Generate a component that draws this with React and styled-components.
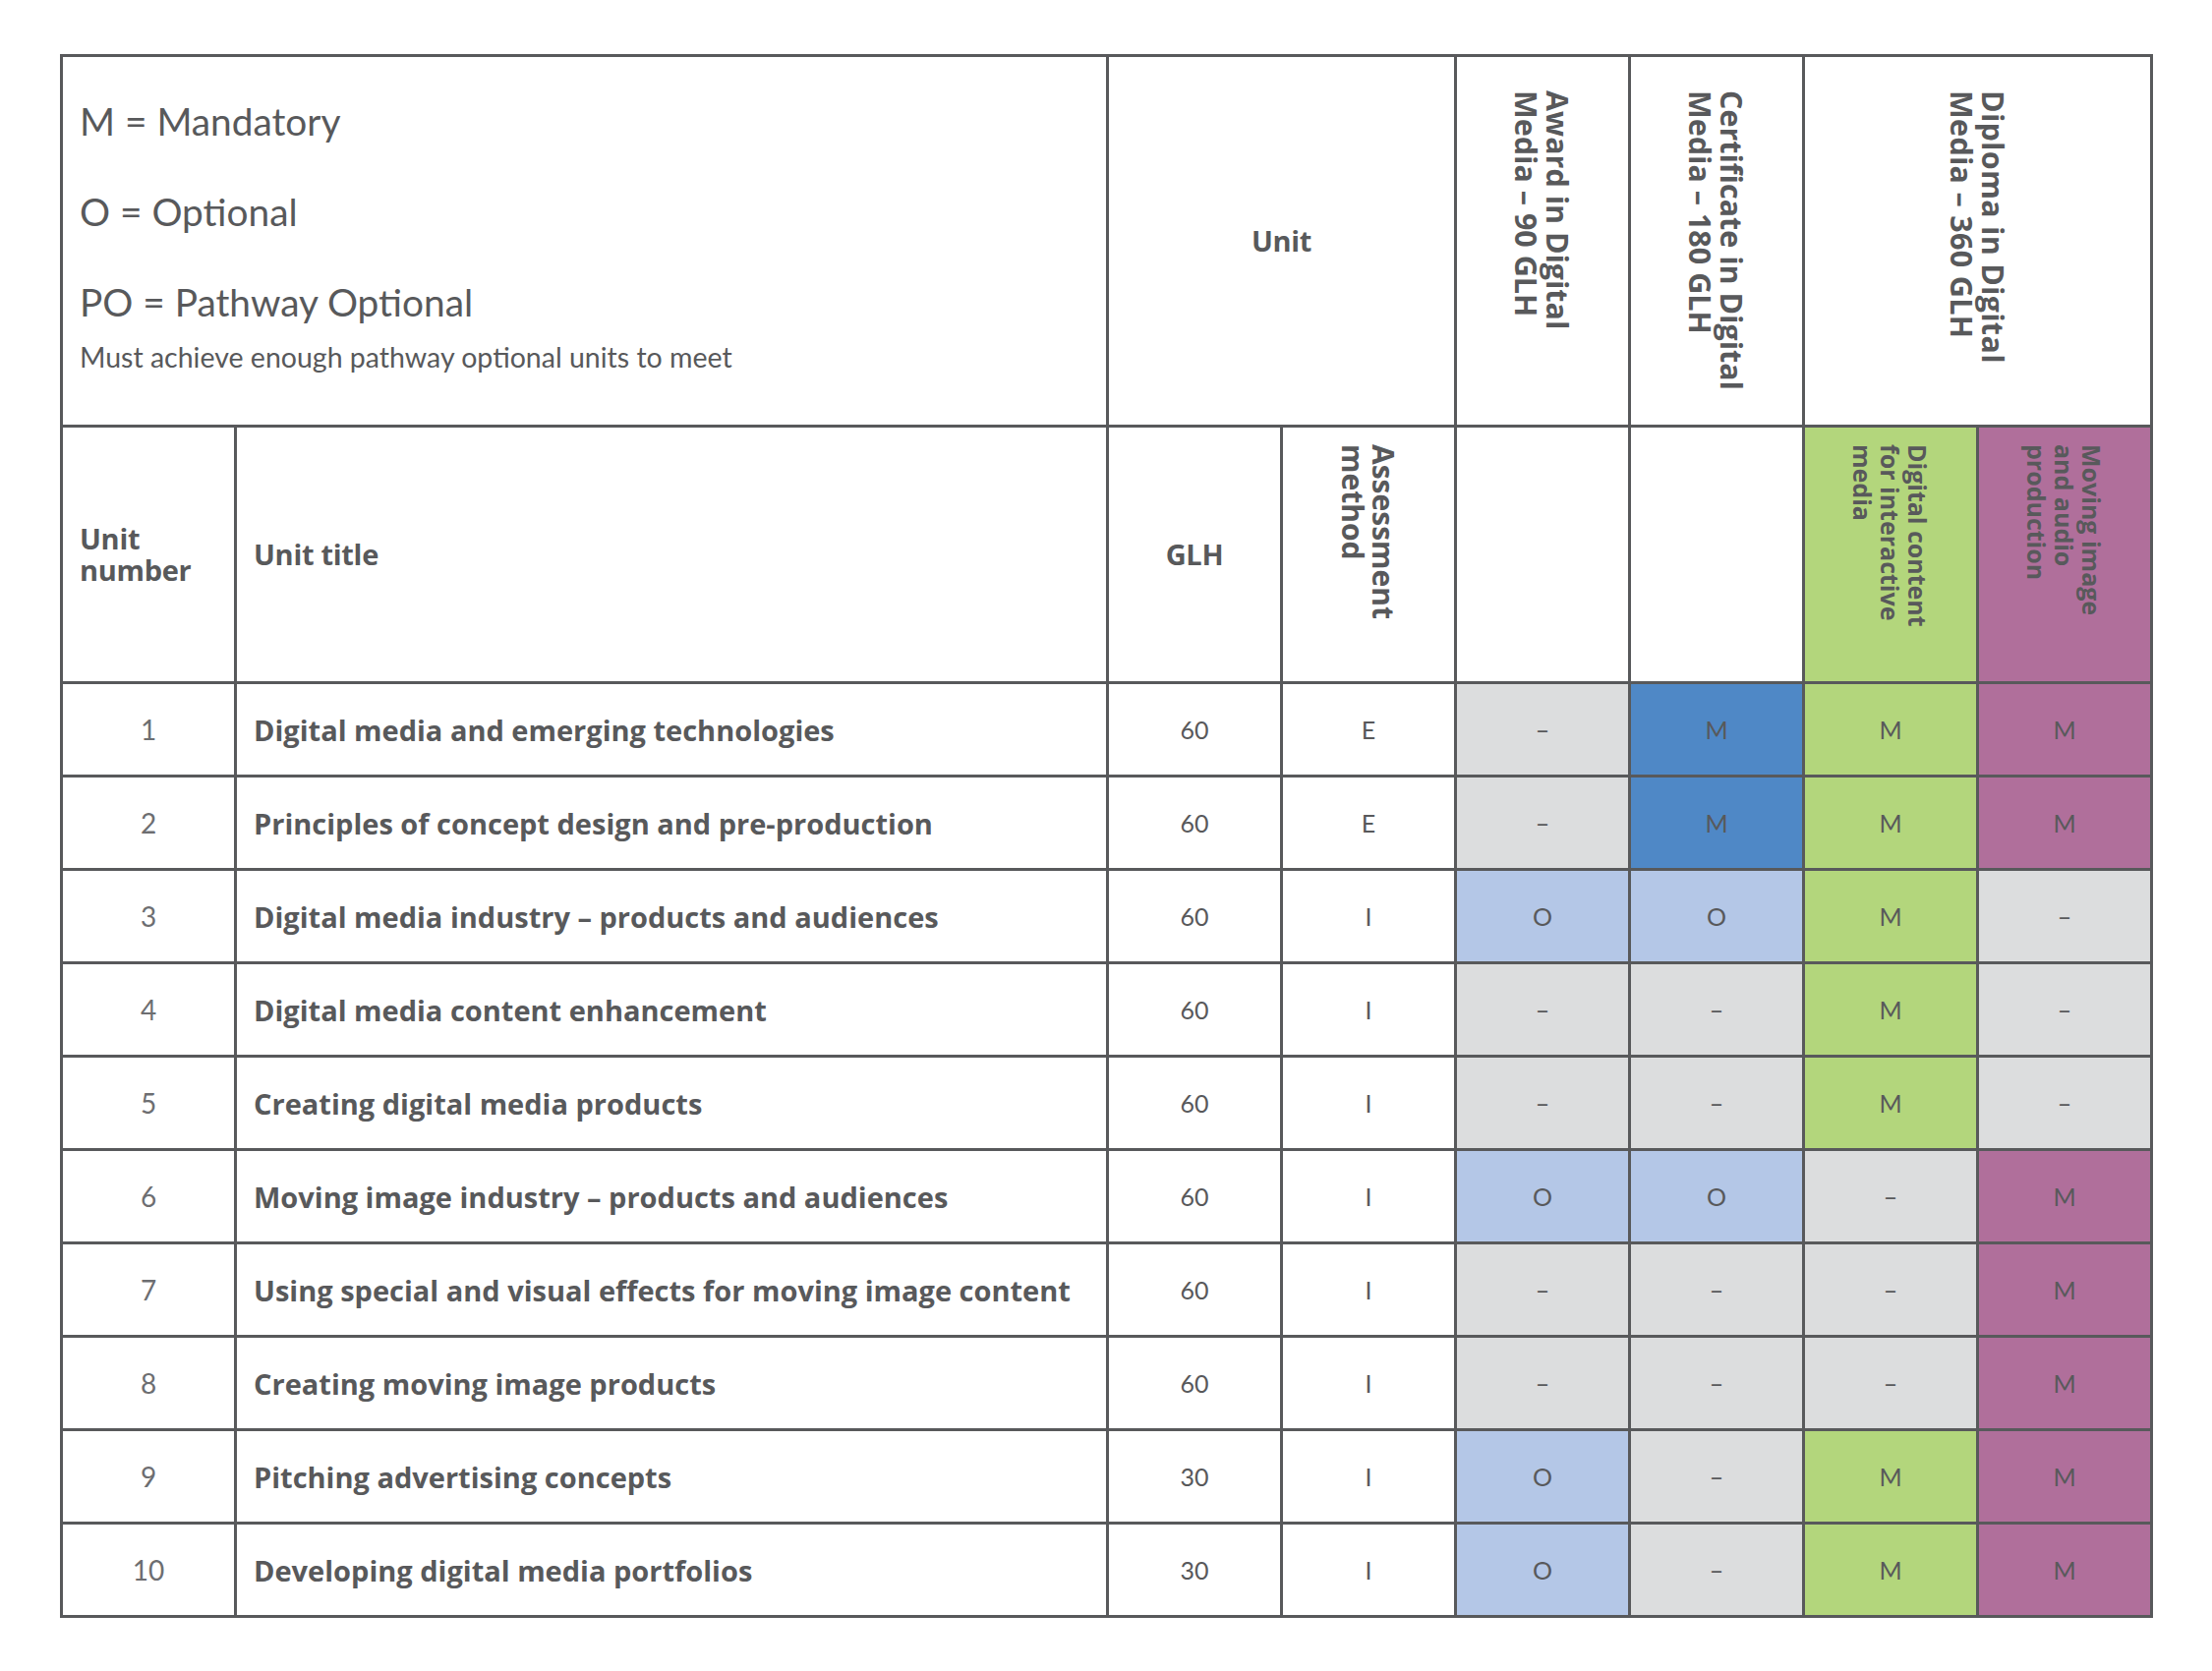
import React from 'react';
import styled, { createGlobalStyle } from 'styled-components';

const GlobalStyle = createGlobalStyle`
  html, body { margin: 0; padding: 0; background: #ffffff; }
  body { font-family: "Open Sans", "Liberation Sans", sans-serif; color: #58595b; }
  * { box-sizing: border-box; }
`;

const tones = {
  white: '#ffffff',
  grey: '#dcddde',
  blue: '#4f88c6',
  light: '#b4c7e7',
  green: '#b3d67c',
  purple: '#b06f9b',
};

const Page = styled.div`
  width: 2250px;
  min-height: 1700px;
  padding: 55px 0 0 61px;
`;

const Table = styled.div`
  display: grid;
  grid-template-columns: 174px 884px repeat(6, 174px);
  grid-template-rows: 374px 258px repeat(10, 92px);
  gap: 3px;
  padding: 3px;
  background: #58595b;
  width: max-content;
`;

const Cell = styled.div`
  background: ${(p) => tones[p.$tone || 'white']};
  grid-column: ${(p) => (p.$span ? `span ${p.$span}` : 'auto')};
  display: flex;
  align-items: center;
  justify-content: ${(p) => (p.$left ? 'flex-start' : 'center')};
  padding-left: ${(p) => (p.$left ? '17px' : '0')};
  min-width: 0;
`;

const LegendCell = styled.div`
  grid-column: span 2;
  background: #ffffff;
  display: flex;
  flex-direction: column;
  padding: 19px 0 0 17px;
  font-family: Lato, "Open Sans", sans-serif;
`;

const LegendLine = styled.div`
  font-size: 38.8px;
  line-height: 92px;
  height: 92px;
  white-space: nowrap;
`;

const LegendNote = styled.div`
  font-size: 28.5px;
  line-height: 32px;
  margin-top: -6px;
  white-space: nowrap;
`;

const HeadText = styled.div`
  font-family: "Open Sans", sans-serif;
  font-weight: 700;
  font-size: 29px;
  line-height: 32px;
  letter-spacing: -0.3px;
  white-space: nowrap;
`;

const HeadLine = styled.div`
  height: 32px;
`;

const VerticalCell = styled.div`
  background: ${(p) => tones[p.$tone || 'white']};
  grid-column: ${(p) => (p.$span ? `span ${p.$span}` : 'auto')};
  display: flex;
  justify-content: center;
  align-items: flex-start;
  padding-top: ${(p) => p.$top}px;
`;

const VerticalText = styled.div`
  writing-mode: vertical-rl;
  white-space: nowrap;
  font-family: "Open Sans", sans-serif;
  font-weight: ${(p) => p.$weight || 700};
  font-size: ${(p) => p.$size}px;
  line-height: ${(p) => p.$line}px;
  letter-spacing: ${(p) => p.$spacing || 0}px;
`;

const NumberText = styled.span`
  font-family: Lato, "Open Sans", sans-serif;
  font-size: 28px;
  color: #6d6e71;
`;

const TitleText = styled.span`
  font-family: "Open Sans", sans-serif;
  font-weight: 700;
  font-size: 29px;
  white-space: nowrap;
`;

const ValueText = styled.span`
  font-family: Lato, "Open Sans", sans-serif;
  font-weight: 400;
  font-size: 25px;
  color: #58595b;
`;

const units = [
  { n: 1, title: 'Digital media and emerging technologies', glh: 60, a: 'E', v: [['grey', '–'], ['blue', 'M'], ['green', 'M'], ['purple', 'M']] },
  { n: 2, title: 'Principles of concept design and pre-production', glh: 60, a: 'E', v: [['grey', '–'], ['blue', 'M'], ['green', 'M'], ['purple', 'M']] },
  { n: 3, title: 'Digital media industry – products and audiences', glh: 60, a: 'I', v: [['light', 'O'], ['light', 'O'], ['green', 'M'], ['grey', '–']] },
  { n: 4, title: 'Digital media content enhancement', glh: 60, a: 'I', v: [['grey', '–'], ['grey', '–'], ['green', 'M'], ['grey', '–']] },
  { n: 5, title: 'Creating digital media products', glh: 60, a: 'I', v: [['grey', '–'], ['grey', '–'], ['green', 'M'], ['grey', '–']] },
  { n: 6, title: 'Moving image industry – products and audiences', glh: 60, a: 'I', v: [['light', 'O'], ['light', 'O'], ['grey', '–'], ['purple', 'M']] },
  { n: 7, title: 'Using special and visual effects for moving image content', glh: 60, a: 'I', v: [['grey', '–'], ['grey', '–'], ['grey', '–'], ['purple', 'M']] },
  { n: 8, title: 'Creating moving image products', glh: 60, a: 'I', v: [['grey', '–'], ['grey', '–'], ['grey', '–'], ['purple', 'M']] },
  { n: 9, title: 'Pitching advertising concepts', glh: 30, a: 'I', v: [['light', 'O'], ['grey', '–'], ['green', 'M'], ['purple', 'M']] },
  { n: 10, title: 'Developing digital media portfolios', glh: 30, a: 'I', v: [['light', 'O'], ['grey', '–'], ['green', 'M'], ['purple', 'M']] },
];

export default function App() {
  return (
    <Page>
      <GlobalStyle />
      <Table>
        <LegendCell>
          <LegendLine>M = Mandatory</LegendLine>
          <LegendLine>O = Optional</LegendLine>
          <LegendLine>PO = Pathway Optional</LegendLine>
          <LegendNote>Must achieve enough pathway optional units to meet</LegendNote>
        </LegendCell>
        <Cell $span={2}>
          <HeadText>Unit</HeadText>
        </Cell>
        <VerticalCell $top={34}>
          <VerticalText $size={30.5} $line={32}>Award in Digital<br />Media – 90 GLH</VerticalText>
        </VerticalCell>
        <VerticalCell $top={34}>
          <VerticalText $size={30.5} $line={32}>Certificate in Digital<br />Media – 180 GLH</VerticalText>
        </VerticalCell>
        <VerticalCell $span={2} $top={34}>
          <VerticalText $size={30.5} $line={32} $spacing={0.3}>Diploma in Digital<br />Media – 360 GLH</VerticalText>
        </VerticalCell>

        <Cell $left>
          <HeadText>
            <HeadLine>Unit</HeadLine>
            <HeadLine>number</HeadLine>
          </HeadText>
        </Cell>
        <Cell $left>
          <HeadText>Unit title</HeadText>
        </Cell>
        <Cell>
          <HeadText>GLH</HeadText>
        </Cell>
        <VerticalCell $top={17}>
          <VerticalText $size={30} $line={31}>Assessment<br />method</VerticalText>
        </VerticalCell>
        <Cell />
        <Cell />
        <VerticalCell $tone="green" $top={17}>
          <VerticalText $size={25} $line={28}>Digital content<br />for interactive<br />media</VerticalText>
        </VerticalCell>
        <VerticalCell $tone="purple" $top={17}>
          <VerticalText $size={25} $line={28}>Moving image<br />and audio<br />production</VerticalText>
        </VerticalCell>

        {units.map((u) => (
          <React.Fragment key={u.n}>
            <Cell>
              <NumberText>{u.n}</NumberText>
            </Cell>
            <Cell $left>
              <TitleText>{u.title}</TitleText>
            </Cell>
            <Cell>
              <ValueText>{u.glh}</ValueText>
            </Cell>
            <Cell>
              <ValueText>{u.a}</ValueText>
            </Cell>
            {u.v.map(([tone, val], i) => (
              <Cell key={i} $tone={tone}>
                <ValueText>{val}</ValueText>
              </Cell>
            ))}
          </React.Fragment>
        ))}
      </Table>
    </Page>
  );
}
